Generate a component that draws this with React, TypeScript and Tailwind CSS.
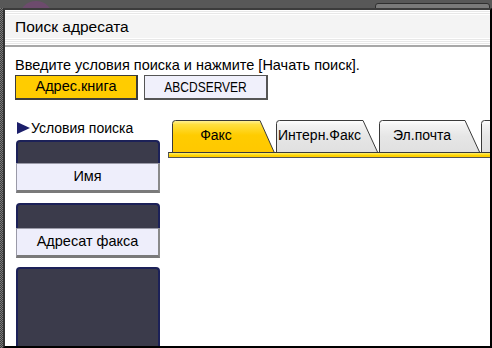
import React from "react";

const font = "font-['Liberation_Sans',Arial,sans-serif]";

type TabProps = {
  label: string;
  width: number;
  active?: boolean;
  className: string;
};

function Tab({ label, width, active, className }: TabProps) {
  const slant = 15;
  const id = active ? "tabActive" : "tabIdle";
  return (
    <div className={`relative h-[32px] shrink-0 ${className} ${active ? "z-10" : ""}`}>
      <svg
        className="absolute inset-0 h-full w-full"
        viewBox={`0 0 ${width} 32`}
        preserveAspectRatio="none"
      >
        <defs>
          <linearGradient id="tabActive" x1="0" y1="0" x2="0" y2="1">
            <stop offset="0" stopColor="#fff3a0" />
            <stop offset="0.12" stopColor="#ffe040" />
            <stop offset="0.45" stopColor="#ffcc00" />
            <stop offset="1" stopColor="#ffc800" />
          </linearGradient>
          <linearGradient id="tabIdle" x1="0" y1="0" x2="0" y2="1">
            <stop offset="0" stopColor="#ffffff" />
            <stop offset="0.15" stopColor="#f2f2f2" />
            <stop offset="0.5" stopColor="#e6e6e6" />
            <stop offset="1" stopColor="#e0e0e0" />
          </linearGradient>
        </defs>
        <path
          d={`M0.5 ${active ? 33 : 32} V3.5 Q0.5 0.5 3.5 0.5 H${width - slant} L${width - 0.5} ${active ? 33 : 32}`}
          fill={`url(#${id})`}
          stroke="#3a3a3a"
          strokeWidth="1"
        />
      </svg>
      <div
        className="relative flex h-full items-center justify-center pb-[1px] text-[14px] text-black"
        style={{ width: width - slant }}
      >
        {label}
      </div>
    </div>
  );
}

function DarkBox({ className }: { className: string }) {
  return (
    <div
      className={`rounded-t-[4px] border-2 border-b-0 border-[#1c2158] bg-[#3b3b4b] ${className}`}
    />
  );
}

function ListButton({ label }: { label: string }) {
  return (
    <div className="flex h-[30px] items-center justify-center border border-[#9a9aa8] border-b-[3px] border-b-[#7a7a7a] border-r-[2px] border-r-[#8a8a8a] bg-[#eeeefb] text-[14.5px] text-black">
      {label}
    </div>
  );
}

export default function App() {
  return (
    <div className={`relative flex h-[348px] w-[492px] flex-col overflow-hidden bg-[#585858] ${font}`}>
      {/* backdrop above the dialog */}
      <div className="relative h-[8px] shrink-0">
        <div className="absolute left-[19px] top-[1px] h-[34px] w-[34px] rounded-full bg-[#6d4b6d]" />
        <div className="absolute left-[375px] top-[3px] h-[12px] w-[115px] rounded-[3px] border border-[#2f2f2f] bg-[#7a7a7a]" />
      </div>

      <div className="relative z-10 flex min-h-0 flex-1">
        <div className="w-[3px] shrink-0 bg-[repeating-conic-gradient(#3e3e3e_0_25%,#7a7a7a_0_50%)] bg-[length:2px_2px]" />

        <div className="flex min-w-0 flex-1 flex-col border-b-2 border-l-2 border-r-2 border-t-2 border-b-black border-l-[#333] border-r-black border-t-[#3c3c3c] bg-white">
          {/* title bar */}
          <div className="flex h-[37px] shrink-0 flex-col border-b-2 border-[#a8a8a8]">
            <div className="h-[7px] bg-[repeating-linear-gradient(to_bottom,#ffffff_0px,#ffffff_1px,#e8e8e8_1px,#e8e8e8_2px)]" />
            <div className="flex flex-1 items-center bg-[#f4f4f4] pl-[10px] text-[15.5px] text-black">
              Поиск адресата
            </div>
            <div className="h-[9px] bg-[repeating-linear-gradient(to_bottom,#ffffff_0px,#ffffff_1px,#e8e8e8_1px,#e8e8e8_2px)]" />
          </div>

          <div className="flex min-h-0 flex-1 flex-col pl-[10px]">
            <div className="mt-[9px] h-[18px] text-[14.5px] leading-[18px] text-black">
              Введите условия поиска и нажмите [Начать поиск].
            </div>

            <div className="mt-[1px] flex gap-[6px]">
              <div className="flex h-[25px] w-[123px] items-center justify-center border border-[#3c3c3c] border-b-2 border-r-2 bg-[#ffcc00] text-[14.5px] text-black">
                Адрес.книга
              </div>
              <div className="flex h-[25px] w-[124px] items-center justify-center border border-[#555] border-b-2 border-r-2 bg-[#f0f0fb] text-[15px] text-black">
                <span className="inline-block scale-x-[0.8]">ABCDSERVER</span>
              </div>
            </div>

            <div className="mt-[18px] flex min-h-0 flex-1 gap-[8px]">
              {/* left column */}
              <div className="flex w-[145px] shrink-0 flex-col">
                <div className="flex h-[20px] items-center gap-[1px] text-[14px] text-black">
                  <svg width="13" height="12" viewBox="0 0 13 12" className="ml-[2px]">
                    <path d="M0 0 L13 6 L0 12 Z" fill="#1c1f6a" />
                  </svg>
                  Условия поиска
                </div>
                <div className="mt-[2px] pl-[1px]">
                  <DarkBox className="h-[23px]" />
                  <ListButton label="Имя" />
                </div>
                <div className="mt-[10px] pl-[1px]">
                  <DarkBox className="h-[25px]" />
                  <ListButton label="Адресат факса" />
                </div>
                <div className="mt-[9px] flex min-h-0 flex-1 pl-[1px]">
                  <DarkBox className="flex-1" />
                </div>
              </div>

              {/* right column */}
              <div className="flex min-w-0 flex-1 flex-col overflow-hidden pt-[2px]">
                <div className="flex h-[32px] shrink-0 gap-[1px] pl-[4px]">
                  <Tab label="Факс" width={103} active className="w-[103px]" />
                  <Tab label="Интерн.Факс" width={102} className="w-[102px]" />
                  <Tab label="Эл.почта" width={101} className="w-[101px]" />
                  <Tab label="" width={40} className="w-[40px]" />
                </div>
                <div className="h-[6px] shrink-0 border-b border-l border-t border-[#555] border-t-[#3a3a3a] bg-[linear-gradient(to_bottom,#fff06a,#ffd400_60%,#ffcc00)]" />
                <div className="flex-1 bg-white" />
              </div>
            </div>
          </div>
        </div>
      </div>
    </div>
  );
}
